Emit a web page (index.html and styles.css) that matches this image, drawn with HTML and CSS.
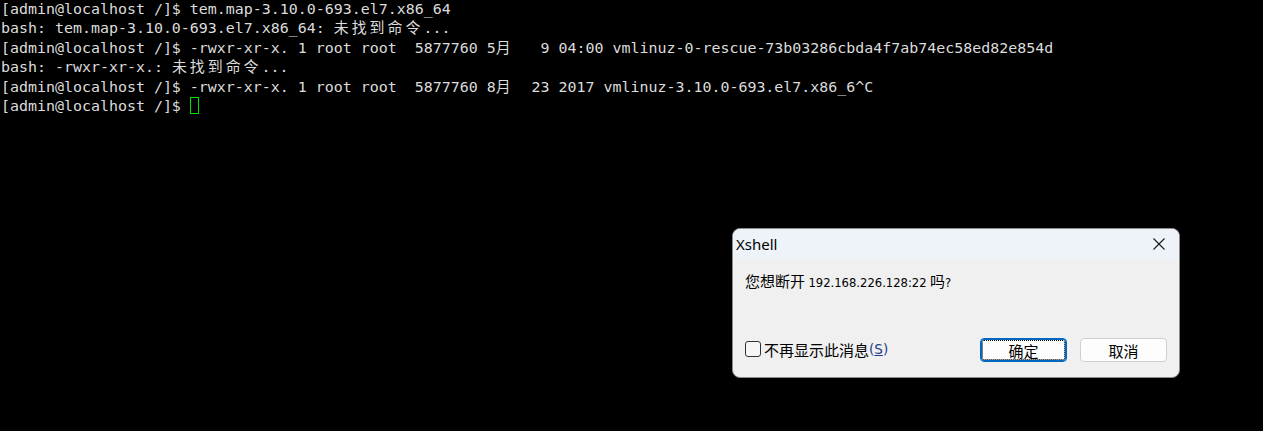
FILE: index.html
```html
<!DOCTYPE html>
<html lang="zh-CN">
<head>
  <meta charset="UTF-8">
  <title>Xshell</title>
  <link rel="stylesheet" href="styles.css">
</head>
<body>
  <!-- terminal output -->
  <pre class="terminal">[admin@localhost /]$ tem.map-3.10.0-693.el7.x86_64
bash: tem.map-3.10.0-693.el7.x86_64: <span class="cjk">未找到命令</span>...
[admin@localhost /]$ -rwxr-xr-x. 1 root root  5877760 5<span class="cjk">月</span>   9 04:00 vmlinuz-0-rescue-73b03286cbda4f7ab74ec58ed82e854d
bash: -rwxr-xr-x.: <span class="cjk">未找到命令</span>...
[admin@localhost /]$ -rwxr-xr-x. 1 root root  5877760 8<span class="cjk">月</span>  23 2017 vmlinuz-3.10.0-693.el7.x86_6^C
[admin@localhost /]$ <span class="cursor"></span></pre>

  <!-- disconnect dialog -->
  <div class="dialog">
    <div class="titleBar">
      <span class="title">Xshell</span>
      <svg class="closeIcon" width="14" height="14" viewBox="0 0 14 14">
        <path d="M1.5 1.5 L12.5 12.5 M12.5 1.5 L1.5 12.5" stroke="#1a1a1a" stroke-width="1.1" fill="none"/>
      </svg>
    </div>
    <div class="message">您想断开 <span class="host">192.168.226.128:22</span> 吗<span class="host">?</span></div>
    <div class="footer">
      <label class="checkLabel">
        <span class="checkBox"></span>不再显示此消息<span class="hotkey">(<u>S</u>)</span>
      </label>
      <div class="buttons">
        <button class="btn btnDefault">确定</button>
        <button class="btn">取消</button>
      </div>
    </div>
  </div>
</body>
</html>
```

FILE: styles.css
```css
body {
  margin: 0;
  background-color: #000;
  height: 431px;
  overflow: hidden;
}
.terminal {
  margin: 0;
  padding: 0 0 0 1px;
  font-family: "DejaVu Sans Mono", "Noto Sans CJK SC", monospace;
  font-size: 14.95px;
  line-height: 19.4px;
  color: #dcdcdc;
  white-space: pre;
}
.cjk {
  letter-spacing: 3px;
}
.cursor {
  display: inline-block;
  width: 9px;
  height: 17px;
  border: 1px solid #00e000;
  box-sizing: border-box;
  vertical-align: -3px;
}

/* dialog over the terminal */
.dialog {
  position: absolute;
  left: 732px;
  top: 228px;
  width: 448px;
  height: 150px;
  box-sizing: border-box;
  background-color: #f0f0f0;
  border: 1px solid #8c8c8c;
  border-radius: 8px;
  overflow: hidden;
  display: flex;
  flex-direction: column;
  font-family: "Noto Sans", "Noto Sans CJK SC", sans-serif;
  font-size: 15px;
  color: #000;
}
.titleBar {
  height: 30px;
  flex-shrink: 0;
  background-color: #eef3fa;
  display: flex;
  align-items: center;
  justify-content: space-between;
  padding: 0 13px 1px 3px;
}
.title {
  font-size: 15px;
}
.message {
  padding: 11px 0 0 12px;
  line-height: 20px;
  font-family: "Noto Sans CJK SC", sans-serif;
}
.host {
  font-family: "DejaVu Sans", sans-serif;
  font-size: 11.6px;
}
.footer {
  margin-top: auto;
  display: flex;
  align-items: center;
  justify-content: space-between;
  padding: 0 12px 15px 12px;
}
.checkLabel {
  display: flex;
  align-items: center;
  font-family: "Noto Sans CJK SC", sans-serif;
  margin-top: -2px;
}
.checkBox {
  width: 16px;
  height: 16px;
  box-sizing: border-box;
  border: 1px solid #333;
  border-radius: 3px;
  background-color: #f6f6f6;
  margin-right: 3px;
}
.hotkey {
  font-family: "DejaVu Sans", sans-serif;
  font-size: 13.5px;
  color: #1a3d8c;
}
.buttons {
  display: flex;
  gap: 13px;
}
.btn {
  width: 87px;
  height: 24px;
  box-sizing: border-box;
  background-color: #fdfdfd;
  border: 1px solid #d0d0d0;
  border-radius: 4px;
  font-family: "Noto Sans CJK SC", sans-serif;
  font-size: 15px;
  padding: 0;
  color: #000;
}
.btnDefault {
  border: 1px solid #0067c0;
  box-shadow: inset 0 0 0 1px #0067c0;
  outline: 1px dotted #000;
  outline-offset: -3px;
}
```
